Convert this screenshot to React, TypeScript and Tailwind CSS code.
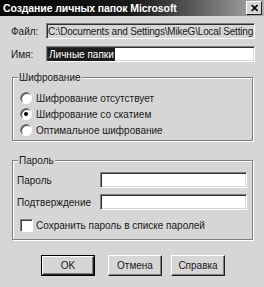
import React from "react";

const sunken =
  "border-t border-l border-b border-r border-t-[#808080] border-l-[#808080] border-b-white border-r-white shadow-[inset_1px_1px_0_#303030,inset_-1px_-1px_0_#d6d6d6]";

function Radio({ checked, label }: { checked?: boolean; label: string }) {
  return (
    <div className="flex items-center h-[16px]">
      <div className="w-[12px] h-[12px] rounded-full bg-white border border-t-[#808080] border-l-[#808080] border-b-white border-r-white shadow-[inset_1px_1px_0_#404040] flex items-center justify-center">
        {checked && <div className="w-[4px] h-[4px] rounded-full bg-black" />}
      </div>
      <span className="ml-[4px]">{label}</span>
    </div>
  );
}

function Btn({ label, def, className }: { label: string; def?: boolean; className?: string }) {
  return (
    <div
      className={
        "w-[54px] h-[21px] flex items-center justify-center bg-[#d6d6d6] " +
        (def ? "border border-black " : "") +
        (className || "")
      }
    >
      <div className="w-full h-full flex items-center justify-center border border-t-white border-l-white border-b-[#202020] border-r-[#202020] shadow-[inset_-1px_-1px_0_#808080]">
        {label}
      </div>
    </div>
  );
}

export default function App() {
  return (
    <div className="w-[264px] h-[287px] bg-[#d6d6d6] flex flex-col font-['Liberation_Sans',Arial,sans-serif] text-[10px] text-[#1a1a1a] overflow-hidden">
      {/* title bar */}
      <div className="h-[16px] flex items-center bg-gradient-to-r from-[#050505] via-[#1a1a1a] to-[#b0b0b0] pl-[3px] pr-[2px]">
        <span className="text-white font-bold text-[10.5px] tracking-[-0.1px] leading-none">
          Создание личных папок Microsoft
        </span>
        <div className="ml-auto w-[16px] h-[14px] bg-[#d6d6d6] border border-t-white border-l-white border-b-[#202020] border-r-[#202020] flex items-center justify-center text-[11px] font-bold leading-none text-black">
          ✕
        </div>
      </div>

      {/* file row */}
      <div className="mt-[7px] ml-[11px] flex items-center h-[16px]">
        <span className="w-[35px]">Файл:</span>
        <div className={"w-[209px] h-[16px] bg-[#d6d6d6] flex items-center pl-[1px] whitespace-nowrap overflow-hidden tracking-[-0.2px] " + sunken}>
          C:\Documents and Settings\MikeG\Local Setting
        </div>
      </div>

      {/* name row */}
      <div className="mt-[7px] ml-[11px] flex items-center h-[16px]">
        <span className="w-[35px]">Имя:</span>
        <div className={"w-[209px] h-[16px] bg-white flex items-center pl-[1px] " + sunken}>
          <span className="bg-[#1c1c1c] text-white px-[1px] leading-[13px]">Личные папки</span>
        </div>
      </div>

      {/* encryption group */}
      <div className="relative mt-[15px] ml-[12px] w-[241px] h-[64px] border border-[#808080] shadow-[inset_1px_1px_0_#fff,1px_1px_0_#fff] pt-[12px] pl-[7px]">
        <span className="absolute left-[5px] top-[-8px] bg-[#d6d6d6] px-[1px]">Шифрование</span>
        <Radio label="Шифрование отсутствует" />
        <Radio checked label="Шифрование со скатием" />
        <Radio label="Оптимальное шифрование" />
      </div>

      {/* password group */}
      <div className="relative mt-[19px] ml-[12px] w-[241px] h-[80px] border border-[#808080] shadow-[inset_1px_1px_0_#fff,1px_1px_0_#fff] pt-[11px] pl-[4px]">
        <span className="absolute left-[5px] top-[-8px] bg-[#d6d6d6] px-[1px]">Пароль</span>
        <div className="flex items-center h-[16px]">
          <span className="w-[83px]">Пароль</span>
          <div className={"w-[147px] h-[16px] bg-white " + sunken} />
        </div>
        <div className="mt-[6px] flex items-center h-[16px]">
          <span className="w-[83px]">Подтверждение</span>
          <div className={"w-[147px] h-[16px] bg-white " + sunken} />
        </div>
        <div className="mt-[7px] flex items-center h-[16px] pl-[3px]">
          <div className="w-[13px] h-[13px] bg-white border border-t-[#808080] border-l-[#808080] border-b-white border-r-white shadow-[inset_1px_1px_0_#404040]" />
          <span className="ml-[3px]">Сохранить пароль в списке паролей</span>
        </div>
      </div>

      {/* buttons */}
      <div className="mt-[15px] ml-[41px] flex">
        <Btn label="OK" def />
        <Btn label="Отмена" className="ml-[13px]" />
        <Btn label="Справка" className="ml-[9px]" />
      </div>
    </div>
  );
}
